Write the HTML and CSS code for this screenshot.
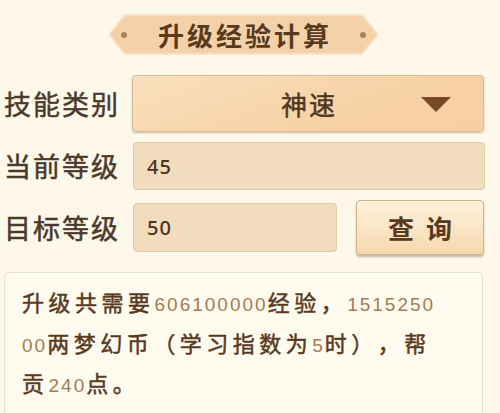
FILE: index.html
```html
<!DOCTYPE html>
<html lang="zh-CN">
<head>
<meta charset="utf-8">
<link rel="stylesheet" href="styles.css">
</head>
<body>
<div class="page">
  <div class="title-row">
    <div class="banner"><span class="dot"></span><span class="banner-text">升级经验计算</span><span class="dot"></span></div>
  </div>
  <div class="form">
    <div class="label">技能类别</div>
    <div class="select"><span class="select-text">神速</span><span class="arrow"></span></div>
    <div class="label">当前等级</div>
    <input class="field" type="text" value="45">
    <div class="label">目标等级</div>
    <div class="last-row">
      <input class="field short" type="text" value="50">
      <button class="btn" type="button">查 询</button>
    </div>
  </div>
  <div class="result">升级共需要<span class="num">606100000</span>经验，<span class="num">151525000</span>两梦幻币（学习指数为<span class="num">5</span>时），帮贡<span class="num">240</span>点。</div>
</div>
</body>
</html>
```
FILE: styles.css
```css
html, body {
  margin: 0;
  padding: 0;
  background: #fdf8e9;
}
body {
  font-family: "Noto Sans CJK SC", "Noto Sans", sans-serif;
  color: #4b3826;
  overflow: hidden;
  height: 413px;
  text-spacing-trim: space-all;
}
.page {
  width: 479px;
  padding: 14px 0 0 4px;
}
.title-row {
  display: flex;
  justify-content: center;
  height: 41px;
}
.banner {
  width: 270px;
  height: 41px;
  background: #f8e2c6;
  clip-path: polygon(16px 0, 254px 0, 270px 20px, 270px 21px, 254px 41px, 16px 41px, 0 21px, 0 20px);
  display: flex;
  align-items: center;
  justify-content: space-between;
  padding: 0 12px 0 12px;
  box-sizing: border-box;
  position: relative;
}
.banner::before {
  content: "";
  position: absolute;
  inset: 2px 2px;
  background: #f3d2a9;
  clip-path: polygon(15px 0, 251px 0, 266px 18px, 266px 19px, 251px 37px, 15px 37px, 0 19px, 0 18px);
  z-index: 0;
}
.dot {
  width: 6px;
  height: 6px;
  border-radius: 50%;
  background: #a9845c;
  position: relative;
  z-index: 1;
}
.banner-text {
  position: relative;
  z-index: 1;
  font-size: 26px;
  font-weight: bold;
  letter-spacing: 3px;
  margin-right: -3px;
  color: #5a3a1e;
  line-height: 41px;
}
.form {
  margin-top: 20px;
  display: grid;
  grid-template-columns: 128px 1fr;
  row-gap: 10px;
  align-items: center;
}
.label {
  font-size: 27px;
  letter-spacing: 2px;
  color: #4b3a2b;
  line-height: 40px;
  white-space: nowrap;
  -webkit-text-stroke: 0.5px #4b3a2b;
}
.select {
  height: 57px;
  box-sizing: border-box;
  border: 1.5px solid #d6bd98;
  border-radius: 4px;
  background: linear-gradient(160deg, #fae0be 0%, #f7d2a6 60%, #f6cfa1 100%);
  box-shadow: 0 1px 2px rgba(120, 80, 40, 0.35);
  display: flex;
  align-items: center;
  justify-content: center;
  position: relative;
}
.select-text {
  font-size: 26px;
  color: #4f3621;
  letter-spacing: 2px;
  margin-right: -2px;
  -webkit-text-stroke: 0.5px #4f3621;
}
.arrow {
  position: absolute;
  right: 32px;
  top: 21px;
  width: 0;
  height: 0;
  border-left: 15px solid transparent;
  border-right: 15px solid transparent;
  border-top: 15px solid #7a4a28;
}
.field {
  display: block;
  height: 48px;
  width: 100%;
  box-sizing: border-box;
  margin: 0 0 0 1px;
  border: 1px solid #e2c9a6;
  border-radius: 4px;
  background: #f3dbbd;
  padding: 0 0 0 13px;
  font-family: "Noto Sans", "Liberation Sans", sans-serif;
  font-size: 20px;
  font-weight: 500;
  letter-spacing: 1px;
  color: #4a3420;
  outline: none;
}
.last-row {
  display: flex;
  align-items: center;
  gap: 18px;
}
.field.short {
  width: 204px;
  height: 49px;
  flex: none;
}
.btn {
  width: 128px;
  height: 55px;
  box-sizing: border-box;
  border: 1.5px solid #cdb28c;
  border-radius: 4px;
  background: linear-gradient(180deg, #fdf1db 0%, #fae5c6 50%, #f7d8ab 100%);
  box-shadow: 0 2px 2px rgba(100, 70, 40, 0.35);
  font-family: "Noto Sans CJK SC", sans-serif;
  font-size: 26px;
  font-weight: bold;
  color: #5a3a1e;
  letter-spacing: 0;
  word-spacing: 6px;
  padding: 0;
  margin-left: 1px;
}
.result {
  margin-top: 17px;
  height: 170px;
  box-sizing: border-box;
  border: 1px solid #ebe0c8;
  border-radius: 5px;
  background: #fffbef;
  padding: 10px 42px 0 17px;
  font-size: 22px;
  letter-spacing: 4.5px;
  line-height: 37.5px;
  color: #5a3a1e;
  word-break: break-all;
  -webkit-text-stroke: 0.5px #5a3a1e;
}
.num {
  font-family: "Liberation Sans", sans-serif;
  font-size: 19px;
  letter-spacing: 2px;
  color: #a57c55;
  -webkit-text-stroke: 0;
}
```
